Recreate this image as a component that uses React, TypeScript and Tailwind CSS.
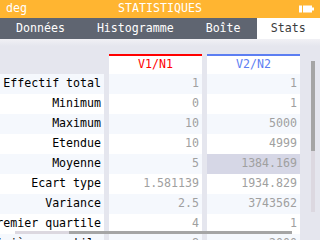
import React from 'react';

type Row = { label: string; v1: string; v2: string };

const rows: Row[] = [
  { label: 'Effectif total', v1: '1', v2: '1' },
  { label: 'Minimum', v1: '0', v2: '1' },
  { label: 'Maximum', v1: '10', v2: '5000' },
  { label: 'Etendue', v1: '10', v2: '4999' },
  { label: 'Moyenne', v1: '5', v2: '1384.169' },
  { label: 'Ecart type', v1: '1.581139', v2: '1934.829' },
  { label: 'Variance', v1: '2.5', v2: '3743562' },
  { label: 'Premier quartile', v1: '4', v2: '1' },
  { label: 'Troisième quartile', v1: '8', v2: '2000' },
];

const tabs = ['Données', 'Histogramme', 'Boîte', 'Stats'];

function Battery() {
  return (
    <svg width="16" height="8" viewBox="0 0 16 8" className="block">
      <rect x="0" y="0.5" width="3" height="7" fill="#fff" />
      <rect x="4" y="0.5" width="9" height="7" fill="#fff" />
      <rect x="13" y="2.5" width="2" height="3" fill="#fff" />
    </svg>
  );
}

export default function App() {
  return (
    <div className="relative w-[320px] h-[240px] overflow-hidden flex flex-col font-['DejaVu_Sans_Mono',monospace] text-[11.6px] leading-none">
      <div className="relative h-[18px] shrink-0 bg-[#ffb531] text-white flex items-center justify-center">
        <span className="absolute left-[6px]">deg</span>
        <span>STATISTIQUES</span>
        <div className="absolute right-[5px] top-[5px]">
          <Battery />
        </div>
      </div>

      <div className="h-[21px] shrink-0 bg-[#5f6571] flex">
        {tabs.map((t) => (
          <div
            key={t}
            className={
              t === 'Stats'
                ? 'flex-1 flex items-center justify-center bg-white text-[#3c3c3c]'
                : 'px-4 flex items-center justify-center text-white'
            }
          >
            {t}
          </div>
        ))}
      </div>

      <div className="relative flex-1 bg-[linear-gradient(#f1f1f5,#e5e6ee_7px)] pt-[15px]">
        <div className="grid grid-cols-[104px_93px_93px] gap-x-[5px]">
          <div />
          <div className="h-[20px] border-t-2 border-[#ff0000] bg-white text-[#ff0000] flex items-center justify-center">
            V1/N1
          </div>
          <div className="h-[20px] border-t-2 border-[#5c7ef2] bg-white text-[#5c7ef2] flex items-center justify-center">
            V2/N2
          </div>

          {rows.map((r, i) => {
            const bg = i % 2 === 0 ? 'bg-[#f5f8fd]' : 'bg-white';
            return (
              <React.Fragment key={r.label}>
                <div className={`h-[20px] ${bg} flex items-center justify-end pr-[3px] whitespace-nowrap text-black`}>
                  {r.label}
                </div>
                <div className={`h-[20px] ${bg} flex items-center justify-end pr-[3px] whitespace-nowrap text-[#a0a0a0]`}>
                  {r.v1}
                </div>
                <div
                  className={`h-[20px] ${
                    r.label === 'Moyenne' ? 'bg-[#d6d7e6]' : bg
                  } flex items-center justify-end pr-[3px] whitespace-nowrap text-[#a0a0a0]`}
                >
                  {r.v2}
                </div>
              </React.Fragment>
            );
          })}
        </div>

        {/* vertical scrollbar */}
        <div className="absolute left-[311px] top-[22px] w-[4px] h-[151px] bg-[#dcd8e0]">
          <div className="h-[90px] bg-[#a5a5a5]" />
        </div>

        {/* horizontal scrollbar */}
        <div className="absolute left-[15px] top-[192px] w-[277px] h-[3px] bg-[#dcd8e0] flex">
          <div className="ml-[54px] flex-1 bg-[#a5a5a5]" />
        </div>
      </div>
    </div>
  );
}
